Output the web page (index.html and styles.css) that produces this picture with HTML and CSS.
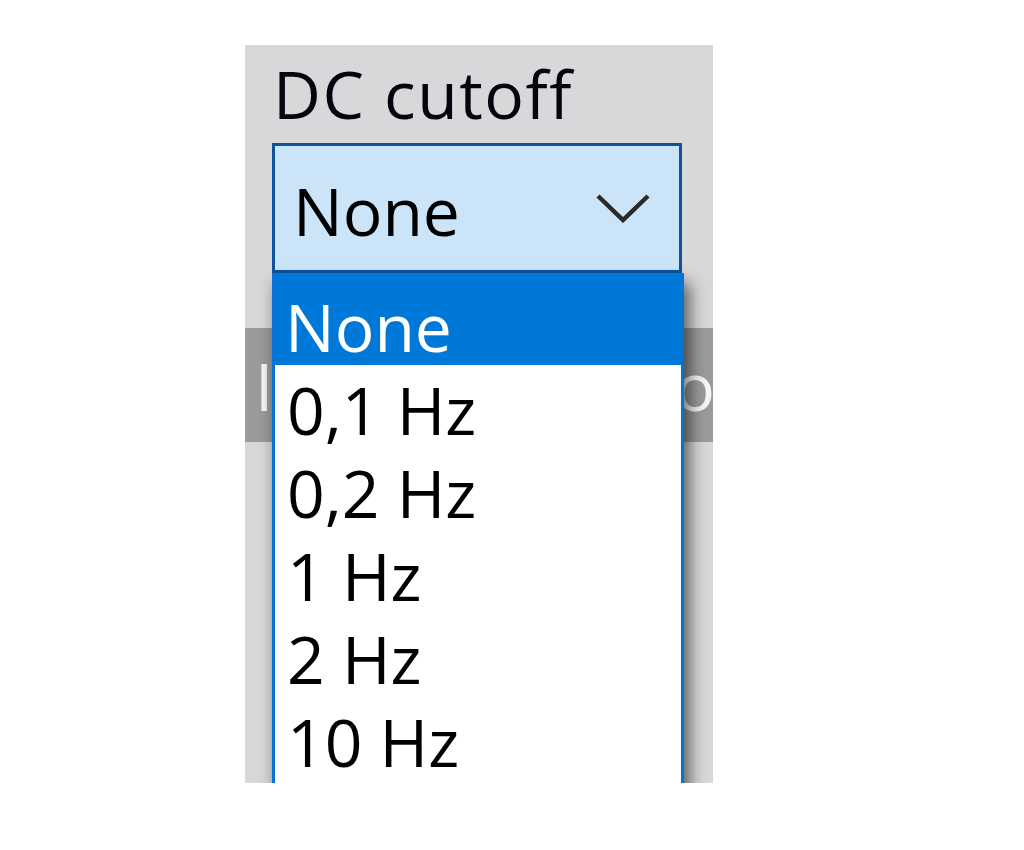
FILE: index.html
```html
<!DOCTYPE html>
<html lang="en">
<head>
<meta charset="utf-8">
<title>DC cutoff</title>
<link rel="stylesheet" href="styles.css">
</head>
<body>
  <div class="panel">
    <div class="label">DC cutoff</div>
    <div class="combo">
      <span class="combo-value">None</span>
      <svg class="chevron" width="54" height="30" viewBox="0 0 54 30" aria-hidden="true">
        <polyline points="2,3 27,27 52,3" fill="none" stroke="#2a2a2a" stroke-width="4.5" stroke-linejoin="miter"/>
      </svg>
    </div>
    <div class="band">
      <span class="band-left">I</span>
      <span class="band-right">o</span>
    </div>
    <ul class="list">
      <li class="item selected">None</li>
      <li class="item">0,1 Hz</li>
      <li class="item">0,2 Hz</li>
      <li class="item">1 Hz</li>
      <li class="item">2 Hz</li>
      <li class="item">10 Hz</li>
    </ul>
  </div>
</body>
</html>
```

FILE: styles.css
```css
html, body {
  margin: 0;
  padding: 0;
  background: #ffffff;
}

body {
  font-family: "Open Sans", "Noto Sans", "DejaVu Sans", sans-serif;
  font-size: 66px;
  color: #000;
}

.panel {
  position: relative;
  margin: 45px 0 0 245px;
  width: 468px;
  height: 738px;
  padding-top: 6px;
  box-sizing: border-box;
  background: #d8d7d9;
  overflow: hidden;
}

.label {
  padding-left: 28px;
  line-height: 84px;
  letter-spacing: 1.5px;
  color: #05050f;
}

.combo {
  margin: 8px 0 0 27px;
  width: 410px;
  height: 130px;
  box-sizing: border-box;
  border: 3px solid #0f52a0;
  background: #cce4f7;
  display: flex;
  align-items: center;
  justify-content: space-between;
}

.combo-value {
  padding-left: 18px;
  line-height: 122px;
  padding-top: 4px;
}

.chevron {
  margin-right: 29px;
  display: block;
}

.band {
  margin-top: 55px;
  height: 114px;
  line-height: 114px;
  background: #9c9b9c;
  color: #f4f6fa;
  display: flex;
  padding-left: 10px;
}

.band-right {
  margin-left: auto;
  margin-right: -2px;
}

.list {
  position: absolute;
  left: 27px;
  top: 228px;
  width: 412px;
  height: 560px;
  margin: 0;
  padding: 0;
  list-style: none;
  box-sizing: border-box;
  background: #ffffff;
  border-left: 3px solid #0a72d6;
  border-right: 3px solid #0a72d6;
  box-shadow: 5px 10px 16px rgba(0, 0, 0, 0.6);
}

.item {
  height: 83px;
  box-sizing: border-box;
  padding: 4px 0 0 12px;
  line-height: 80px;
  white-space: nowrap;
}

.item.selected {
  height: 92px;
  padding: 13px 0 0 10px;
  background: #0078d7;
  color: #ffffff;
}
```
